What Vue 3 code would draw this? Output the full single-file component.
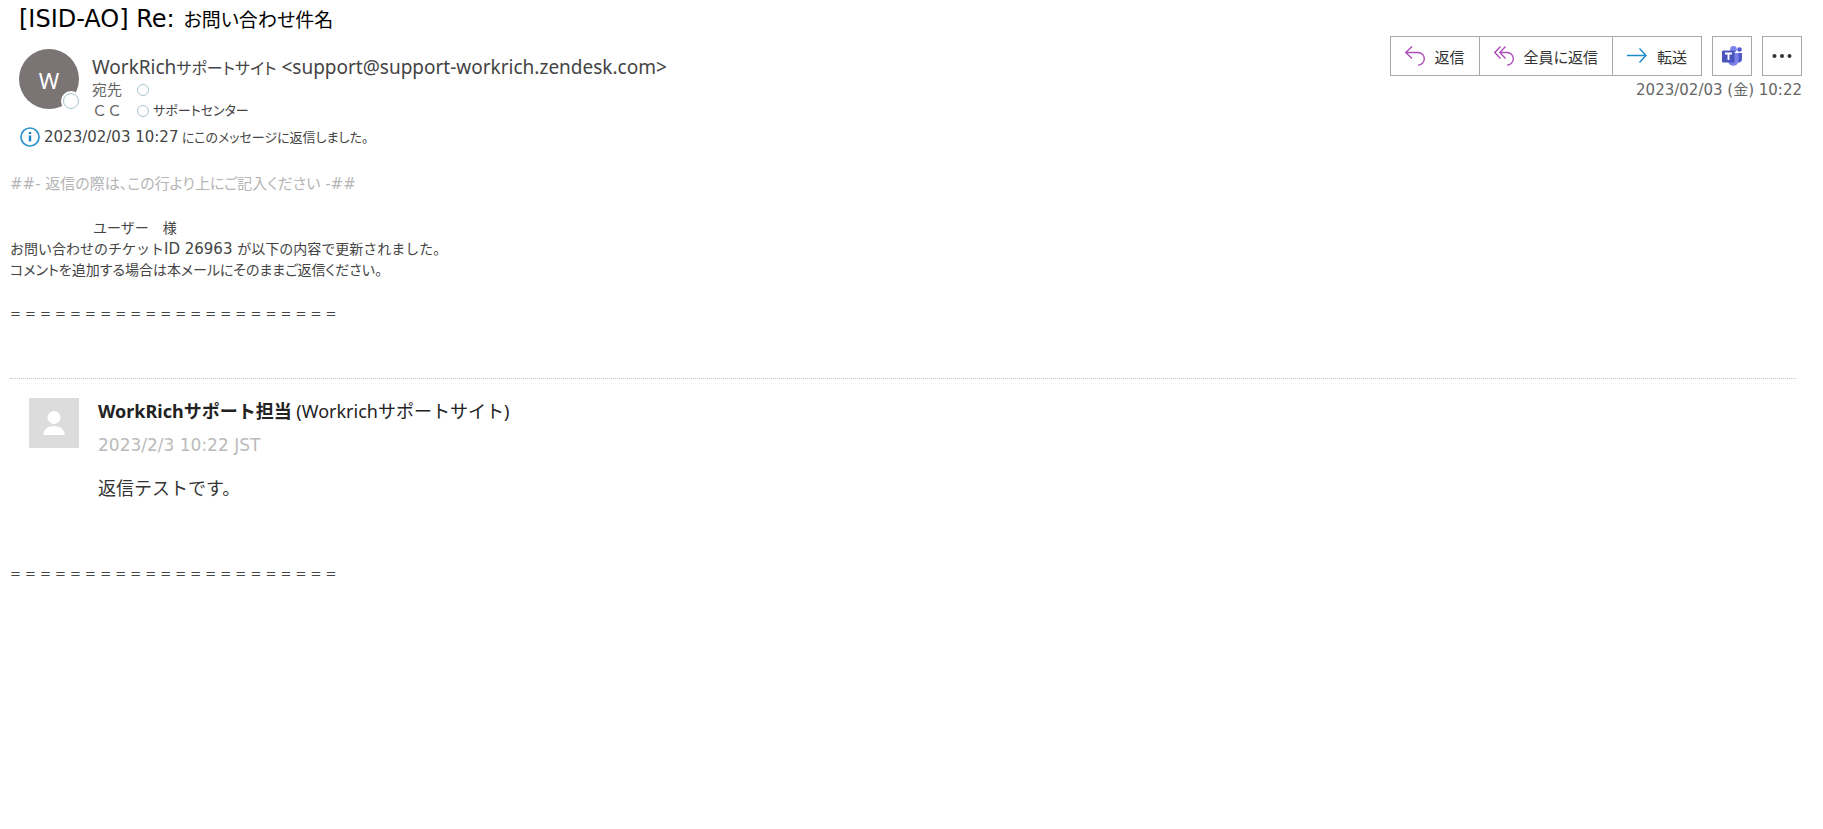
<template>
  <main class="mail">
    <h1 class="subject"><span class="latin">[ISID-AO] Re:</span> {{ subject }}</h1>

    <header class="mail-header">
      <div class="avatar">
        W
        <span class="presence avatar-presence"></span>
      </div>

      <div class="sender">
        <p class="from">WorkRich<span class="kana">サポートサイト</span> &lt;{{ address }}&gt;</p>
        <p class="recipient">
          <span class="recipient-label">宛先</span>
          <span class="presence"></span>
        </p>
        <p class="recipient">
          <span class="recipient-label cc">ＣＣ</span>
          <span class="presence"></span>
          <span class="recipient-name">サポートセンター</span>
        </p>
      </div>

      <div class="side">
        <div class="actions">
          <div class="action-group">
            <button v-for="action in actions" :key="action.label" type="button" class="action">
              <svg class="icon" :class="action.color" viewBox="0 0 20 20" aria-hidden="true">
                <path :d="action.path" />
              </svg>
              {{ action.label }}
            </button>
          </div>
          <button type="button" class="square" aria-label="Teams">
            <svg class="teams" viewBox="0 0 20 20" aria-hidden="true">
              <circle cx="17.5" cy="3.5" r="2.3" fill="#5059c9" />
              <path d="M14 7h6v6a3.5 3.5 0 0 1-6 2.5z" fill="#5059c9" />
              <circle cx="11.5" cy="3.3" r="3.3" fill="#7b83eb" />
              <path d="M6 7h10.5v7.5a5.2 5.2 0 0 1-10.5 0z" fill="#7b83eb" />
              <rect x="0" y="4.5" width="12.5" height="12" rx="1" fill="#4b53bc" />
              <path d="M3 7.5h7M6.5 7.5v6.5" fill="none" stroke="#fff" stroke-width="1.9" />
            </svg>
          </button>
          <button type="button" class="square" aria-label="その他">
            <svg class="icon dots" viewBox="0 0 20 20" aria-hidden="true">
              <circle cx="2.5" cy="10" r="2" />
              <circle cx="10" cy="10" r="2" />
              <circle cx="17.5" cy="10" r="2" />
            </svg>
          </button>
        </div>
        <time class="received" datetime="2023-02-03T10:22">2023/02/03 (金) 10:22</time>
      </div>
    </header>

    <p class="info">
      <svg class="icon" viewBox="0 0 20 20" aria-hidden="true">
        <circle cx="10" cy="10" r="9" fill="#fff" stroke="#2a93cf" stroke-width="1.7" />
        <path d="M10 8.5v6M10 5v2" stroke="#1c86c8" stroke-width="2.4" />
      </svg>
      <span><span class="latin">2023/02/03 10:27</span> にこのメッセージに返信しました。</span>
    </p>

    <section class="body">
      <p class="marker"><span class="latin">##- </span>返信の際は、この行より上にご記入ください<span class="latin"> -##</span></p>
      <p class="line addressee">ユーザー　様</p>
      <p class="line">お問い合わせのチケット<span class="latin">ID 26963 </span>が以下の内容で更新されました。</p>
      <p class="line narrow">コメントを追加する場合は本メールにそのままご返信ください。</p>
      <p class="rule">{{ separator }}</p>

      <article class="comment">
        <svg class="comment-avatar" viewBox="0 0 50 50" aria-hidden="true">
          <rect width="50" height="50" fill="#dcdcdc" />
          <circle cx="25" cy="19.5" r="6.5" fill="#fff" />
          <path d="M14 37c1-6 5-9 11-9s10 3 11 9z" fill="#fff" />
        </svg>
        <div>
          <p class="author"><strong>WorkRichサポート担当</strong> (Workrichサポートサイト)</p>
          <p class="posted">2023/2/3 10:22 JST</p>
          <p class="message">返信テストです。</p>
        </div>
      </article>

      <p class="rule">{{ separator }}</p>
    </section>
  </main>
</template>

<script setup>
const subject = 'お問い合わせ件名'
const address = 'support@support-workrich.zendesk.com'

const actions = [
  { label: '返信', color: 'purple', path: 'M7 .5L.8 6.5L7 12.5M.8 6.5H13a6.3 6.3 0 0 1 0 12.6' },
  { label: '全員に返信', color: 'purple', path: 'M6.5 .5L.8 6.5L6.5 12.5M11.5 .5L5.8 6.5L11.5 12.5M5.8 6.5H13a6.3 6.3 0 0 1 0 12.6' },
  { label: '転送', color: 'blue', path: 'M0 9.5H18.5M12.5 2.5L19 9.5L12.5 16.5' }
]

const separator = Array(22).fill('=').join(' ')
</script>

<style>
body {
  margin: 0;
  background: #fff;
}
</style>

<style scoped>
.mail {
  font-family: 'Noto Sans', 'Noto Sans CJK JP', sans-serif;
  font-size: 15px;
  color: #444;
}

h1, p {
  margin: 0;
  font-weight: 400;
}

.latin {
  font-family: 'DejaVu Sans', 'Noto Sans CJK JP', sans-serif;
  font-size: 15px;
  line-height: 1;
}

.subject {
  height: 36px;
  padding-left: 19px;
  font-size: 19px;
  line-height: 40px;
  color: #000;
  font-feature-settings: 'palt';
}

.subject .latin {
  margin-right: 4px;
  font-size: 24px;
}

.mail-header {
  display: flex;
  padding: 0 21px 0 19px;
  font-feature-settings: 'palt';
}

.avatar {
  position: relative;
  width: 60px;
  height: 60px;
  margin-top: 13px;
  border-radius: 50%;
  background: #7a7574;
  color: #fff;
  font-size: 22px;
  line-height: 62px;
  text-align: center;
}

.presence {
  box-sizing: border-box;
  width: 12px;
  height: 12px;
  border: 1px solid #a9c4d0;
  border-radius: 50%;
  background: #fff;
}

.avatar-presence {
  position: absolute;
  right: 0;
  bottom: 0;
  width: 16px;
  height: 16px;
  box-shadow: 0 0 0 2px #fff;
}

.sender {
  flex: 1;
  margin-left: 13px;
  padding-top: 19px;
}

.from {
  height: 24px;
  font-size: 19px;
  line-height: 24px;
}

.kana {
  font-size: 16px;
}

.recipient {
  display: flex;
  align-items: center;
  line-height: 21px;
}

.recipient-label {
  width: 45px;
  color: #666;
}

.cc {
  font-feature-settings: normal;
}

.recipient-name {
  margin-left: 4px;
  font-size: 13px;
}

.side {
  display: flex;
  flex-direction: column;
  align-items: flex-end;
}

.actions {
  display: flex;
  gap: 10px;
}

.action-group {
  display: flex;
}

.action, .square {
  box-sizing: border-box;
  height: 40px;
  padding: 0 14px;
  border: 1px solid #aaa8a6;
  background: #fff;
  color: #333;
  font-family: inherit;
  font-size: 15px;
  font-feature-settings: 'palt';
  cursor: pointer;
}

.action {
  display: flex;
  align-items: center;
  gap: 10px;
}

.action + .action {
  margin-left: -1px;
}

.square {
  display: flex;
  align-items: center;
  justify-content: center;
  width: 40px;
  padding: 0;
}

.action:hover, .square:hover {
  background: #f3f2f1;
}

.icon, .teams {
  flex: none;
  width: 20px;
  height: 20px;
}

.purple, .blue {
  fill: none;
  stroke-width: 1.4;
}

.purple {
  stroke: #af4fba;
}

.blue {
  stroke: #1e8bcd;
}

.dots {
  fill: #333;
}

.received {
  font-family: 'DejaVu Sans', 'Noto Sans CJK JP', sans-serif;
  line-height: 28px;
  color: #666;
}

.info {
  display: flex;
  align-items: center;
  gap: 4px;
  padding-left: 20px;
  font-size: 13px;
  line-height: 32px;
  font-feature-settings: 'palt';
}

.body {
  padding: 20px 27px 0 10px;
  font-size: 14px;
}

.marker {
  margin-bottom: 23px;
  font-size: 15px;
  line-height: 21px;
  color: #b5b5b5;
  font-feature-settings: 'palt';
}

.line {
  line-height: 21px;
}

.narrow {
  font-feature-settings: 'palt';
}

.addressee {
  padding-left: 83px;
}

.rule {
  margin-top: 23px;
  font-family: 'DejaVu Sans', sans-serif;
  font-size: 13px;
  line-height: 21px;
}

.comment {
  display: flex;
  gap: 19px;
  margin-top: 54px;
  padding: 19px 19px 38px;
  border-top: 1px dotted #c5c5c5;
}

.comment-avatar {
  flex: none;
  width: 50px;
  height: 50px;
}

.author {
  font-size: 18px;
  line-height: 26px;
  color: #222;
}

.posted {
  margin-top: 8px;
  font-family: 'DejaVu Sans', sans-serif;
  font-size: 17px;
  line-height: 26px;
  color: #bbb;
}

.message {
  margin-top: 16px;
  font-size: 18px;
  line-height: 28px;
  color: #333;
}
</style>
